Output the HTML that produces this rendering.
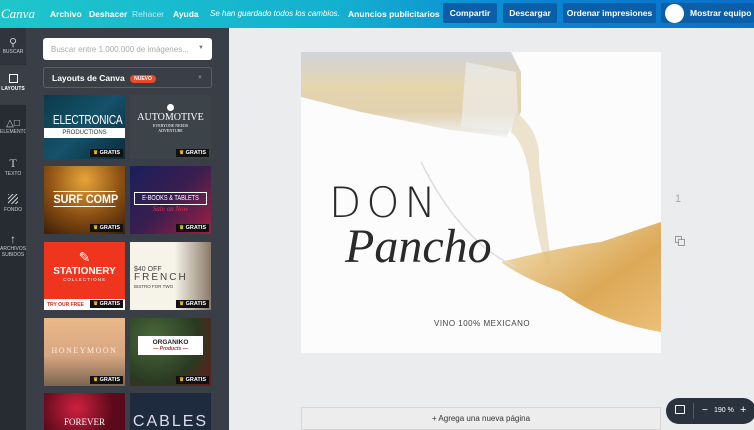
<!DOCTYPE html>
<html><head><meta charset="utf-8"><style>
*{margin:0;padding:0;box-sizing:border-box}
body{width:754px;height:430px;overflow:hidden;font-family:"Liberation Sans",sans-serif;background:#ebeced;position:relative}
.top{position:absolute;left:0;top:0;width:754px;height:28px;background:linear-gradient(90deg,#1ec6cb 0%,#14b0d0 45%,#0a86d3 70%,#0b6fc9 100%);color:#fff;font-size:8.5px;font-weight:bold}
.top span{position:absolute;top:9px;white-space:nowrap}
.btn{position:absolute;top:3px;height:20px;background:#0b5fa8;border-radius:2px;color:#fff;font-size:8.5px;text-align:center;line-height:20px}
.rail{position:absolute;left:0;top:28px;width:26px;height:402px;background:#272b32}
.rail .it{position:absolute;left:0;width:26px;color:#c9ccd1;font-size:5px;text-align:center;overflow:hidden;white-space:nowrap}
.panel{position:absolute;left:26px;top:28px;width:203px;height:402px;background:#3a3f47}
.search{position:absolute;left:43px;top:38px;width:169px;height:22px;background:#fff;border-radius:3px;font-size:8px;color:#aaa;padding:7px 8px}
.lay{position:absolute;left:43px;top:67px;width:169px;height:21px;border:1px solid #5a5f68;border-radius:3px;color:#fff;font-size:8.5px;font-weight:bold;padding:5px 8px}
.nuevo{display:inline-block;background:#e84a2a;border-radius:6px;font-size:5px;padding:1px 4px;margin-left:3px;vertical-align:1px}
.th{position:absolute;width:81px;overflow:hidden;color:#fff;text-align:center;white-space:nowrap}
.g{position:absolute;right:2px;bottom:2px;background:#111;font-size:5.5px;font-weight:bold;padding:1px 3px;color:#fff}
.g b{color:#f5c518}
.design{position:absolute;left:301px;top:52px;width:360px;height:301px;background:#fcfcfc;overflow:hidden}
</style></head><body>
<div class="top">
<span style="left:1px;top:6px;font-family:'Liberation Serif',serif;font-style:italic;font-size:13px;font-weight:normal">Canva</span>
<span style="left:50px">Archivo</span><span style="left:89px">Deshacer</span><span style="left:132px;color:#bfeaf0;font-weight:normal">Rehacer</span><span style="left:173px">Ayuda</span>
<span style="left:210px;font-style:italic;font-weight:normal;font-size:8px">Se han guardado todos los cambios.</span>
<span style="left:348px">Anuncios publicitarios</span>
<div class="btn" style="left:443px;width:54px">Compartir</div>
<div class="btn" style="left:503px;width:54px">Descargar</div>
<div class="btn" style="left:563px;width:93px">Ordenar impresiones</div>
<div class="btn" style="left:661px;width:93px;text-align:left;padding-left:29px">Mostrar equipo</div>
<div style="position:absolute;left:665px;top:4px;width:19px;height:19px;border-radius:50%;background:#fff"></div>
</div>
<div class="rail">
<div class="it" style="top:0;height:37px;background:#30353d;border-radius:0 0 4px 0;padding-top:8px"><div style="font-size:11px">&#9906;</div>BUSCAR</div>
<div class="it" style="top:37px;height:40px;background:#3a3f47;padding-top:9px;color:#fff;font-weight:bold"><div style="width:9px;height:9px;border:1.5px solid #fff;margin:0 auto 3px"></div>LAYOUTS</div>
<div class="it" style="top:90px;padding-top:0"><div style="font-size:10px">&#9651;&#9633;</div>ELEMENTOS</div>
<div class="it" style="top:128px"><div style="font-size:12px;font-family:'Liberation Serif'">T</div>TEXTO</div>
<div class="it" style="top:166px"><div style="width:10px;height:10px;margin:0 auto 3px;background:repeating-linear-gradient(135deg,#c9ccd1 0 1px,transparent 1px 3px)"></div>FONDO</div>
<div class="it" style="top:204px"><div style="font-size:12px">&#8593;</div>ARCHIVOS<br>SUBIDOS</div>
</div>
<div class="panel"></div>
<div class="search">Buscar entre 1.000.000 de imágenes...<span style="float:right;color:#777;font-size:6px">&#9660;</span></div>
<div class="lay">Layouts de Canva <span class="nuevo">NUEVO</span><span style="float:right;color:#777;font-size:6px;margin-top:2px">&#9660;</span></div>

<div class="th" style="left:44px;top:95px;height:64px;background:linear-gradient(135deg,#0d3a4a,#14526a 50%,#0b2a3a)"><div style="font-size:13px;margin-top:17px;transform:scaleX(.78);letter-spacing:-.3px">ELECTRONICA</div><div style="background:#fff;color:#333;font-size:6px;margin-top:1px;padding:2px">PRODUCTIONS</div><div class="g"><b>&#9819;</b> GRATIS</div></div>
<div class="th" style="left:130px;top:95px;height:64px;background:#3d4449"><div style="width:7px;height:7px;border-radius:50%;background:#fff;margin:9px auto 1px"></div><div style="font-family:'Liberation Serif';font-size:10px">AUTOMOTIVE</div><div style="font-size:4px;font-family:'Liberation Serif'">EVERYONE NEEDS<br>ADVENTURE</div><div class="g"><b>&#9819;</b> GRATIS</div></div>

<div class="th" style="left:44px;top:166px;height:68px;background:radial-gradient(circle at 50% 20%,#e8a53a,#8a4e12 55%,#3a1e08)"><div style="font-size:12px;font-weight:bold;margin-top:25px;border-top:1px solid #fff;border-bottom:1px solid #fff;margin-left:6px;margin-right:6px;transform:scaleX(.9)">SURF COMP</div><div class="g"><b>&#9819;</b> GRATIS</div></div>
<div class="th" style="left:130px;top:166px;height:68px;background:linear-gradient(135deg,#1a1f5a,#3a1e50 50%,#a02040)"><div style="border:1px solid #fff;font-size:7px;margin:26px 4px 0;padding:2px 0"><span style="display:inline-block;transform:scaleX(.8)">E-BOOKS &amp; TABLETS</span></div><div style="color:#e8324a;font-style:italic;font-size:7px;font-family:'Liberation Serif'">Sale on Now</div><div class="g"><b>&#9819;</b> GRATIS</div></div>

<div class="th" style="left:44px;top:242px;height:68px;background:#f0351f"><div style="font-size:14px;margin-top:7px">&#9998;</div><div style="font-size:10px;font-weight:bold">STATIONERY</div><div style="font-size:4.5px;letter-spacing:1px">COLLECTIONS</div><div style="position:absolute;bottom:0;left:0;right:0;height:11px;background:#fff;color:#d0301a;font-size:5px;font-weight:bold;text-align:left;padding:3px 3px">TRY OUR FREE</div><div class="g"><b>&#9819;</b> GRATIS</div></div>
<div class="th" style="left:130px;top:242px;height:68px;background:linear-gradient(90deg,#f6f3e8 55%,#8a7a6a)"><div style="color:#444;text-align:left;padding-left:4px;margin-top:24px;font-size:7px;line-height:8px">$40 OFF<br><span style="font-size:10px;letter-spacing:2px">FRENCH</span><br><span style="font-size:4.5px">BISTRO FOR TWO</span></div><div class="g"><b>&#9819;</b> GRATIS</div></div>

<div class="th" style="left:44px;top:318px;height:68px;background:linear-gradient(180deg,#e9b98a,#d8a680 55%,#7a6552)"><div style="font-family:'Liberation Serif';font-size:8px;letter-spacing:1.5px;margin-top:28px;color:#fbeee0">HONEYMOON</div><div class="g"><b>&#9819;</b> GRATIS</div></div>
<div class="th" style="left:130px;top:318px;height:68px;background:radial-gradient(circle at 30% 30%,#4a6a3a,#2a3a22 60%,#6a1a1a)"><div style="background:#fff;color:#222;margin:18px 8px 0;padding:3px;font-size:6.5px;font-weight:bold">ORGANIKO<div style="color:#b03030;font-style:italic;font-size:5px">— Products —</div></div><div class="g"><b>&#9819;</b> GRATIS</div></div>

<div class="th" style="left:44px;top:393px;height:37px;background:radial-gradient(circle at 40% 40%,#d02040,#5a0a1a 70%)"><div style="font-family:'Liberation Serif';font-size:9px;margin-top:24px">FOREVER</div></div>
<div class="th" style="left:130px;top:393px;height:37px;background:#1e2a3e"><div style="font-size:16px;margin-top:20px;letter-spacing:2px;color:#dde">CABLES</div></div>

<div class="design">
<svg width="360" height="301" style="position:absolute;left:0;top:0">
<defs><linearGradient id="b" x1="0" y1="0" x2="0" y2="1"><stop offset="0" stop-color="#c8ccd4"/><stop offset=".4" stop-color="#e2cfa0"/><stop offset=".7" stop-color="#dcc9a0"/><stop offset="1" stop-color="#eef0f2"/></linearGradient>
<linearGradient id="w" x1="0" y1="0" x2="1" y2="1"><stop offset="0" stop-color="#f3e2b8"/><stop offset=".6" stop-color="#d69a3a"/><stop offset="1" stop-color="#e9b460"/></linearGradient></defs>
<path d="M0 0 L210 0 L220 20 L220 60 L205 85 L150 78 L60 60 L0 45 Z" fill="url(#b)" opacity=".85"/>
<path d="M165 10 L215 20 L218 80 L160 75 Z" fill="#eef1f4" opacity=".6"/>
<path d="M215 60 Q240 80 238 110 Q245 170 250 210 L245 215 Q232 170 228 120 Q222 90 210 80 Z" fill="#e8dcc0" opacity=".8"/>
<path d="M200 210 Q260 195 300 190 L360 170 L360 280 Q300 270 260 240 Q220 225 200 210 Z" fill="url(#w)" opacity=".85"/>
<path d="M120 110 Q160 190 215 215" stroke="#ddd" fill="none" stroke-width="1.5"/>
</svg>
<div style="position:absolute;left:28px;top:126px;font-size:42px;color:#2a2a2a;letter-spacing:5px;font-family:'DejaVu Sans','Liberation Sans',sans-serif;font-weight:200">DON</div>
<div style="position:absolute;left:44px;top:167px;font-size:48px;color:#2a2a2a;font-family:'Liberation Serif',serif;font-style:italic">Pancho</div>
<div style="position:absolute;left:133px;top:267px;font-size:8px;color:#444;letter-spacing:.5px">VINO 100% MEXICANO</div>
</div>
<div style="position:absolute;left:675px;top:193px;color:#aaa;font-size:11px">1</div>
<div style="position:absolute;left:675px;top:236px;width:7px;height:7px;border:1px solid #999"></div>
<div style="position:absolute;left:678px;top:239px;width:7px;height:7px;border:1px solid #999;background:#ebeced"></div>
<div style="position:absolute;left:301px;top:407px;width:360px;height:23px;border:1px solid #d6d7d9;background:#ededee;font-size:8px;color:#333;text-align:center;line-height:22px">+ Agrega una nueva página</div>
<div style="position:absolute;left:666px;top:398px;width:90px;height:26px;background:#2a323d;border-radius:13px;color:#fff;font-size:7px">
<div style="position:absolute;left:9px;top:7px;width:10px;height:9px;border:1.5px solid #fff;border-radius:1px"></div>
<div style="position:absolute;left:27px;top:5px;width:1px;height:16px;background:#556"></div>
<span style="position:absolute;left:36px;top:7px;font-size:10px">−</span>
<span style="position:absolute;left:48px;top:9px">190 %</span>
<span style="position:absolute;left:74px;top:6px;font-size:11px">+</span>
</div>
</body></html>
